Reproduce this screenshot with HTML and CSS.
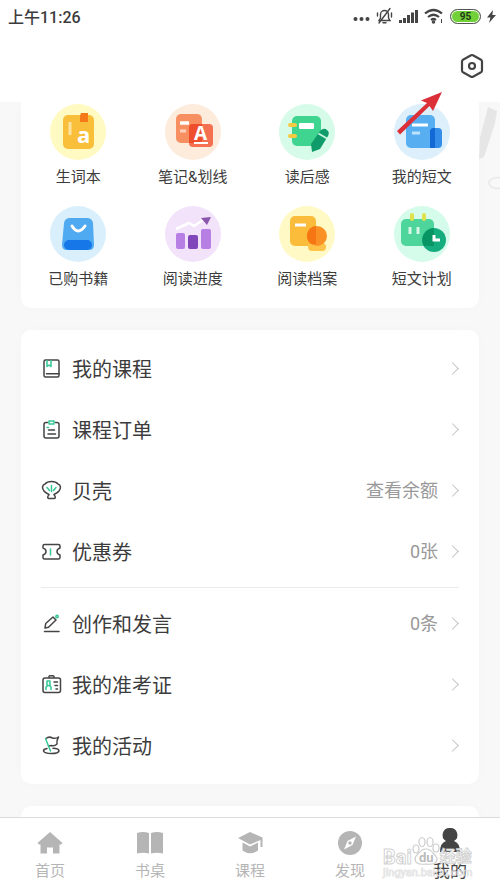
FILE: index.html
```html
<!DOCTYPE html>
<html lang="zh-CN">
<head>
<meta charset="utf-8">
<meta name="viewport" content="width=device-width, initial-scale=1">
<title>我的</title>
<link rel="stylesheet" href="styles.css">
</head>
<body>
<div class="app">
  <header class="top">
    <div class="status">
      <span class="time">上午11:26</span>
      <div class="status-icons">
        <svg width="17" height="18" viewBox="0 0 17 18" fill="#444"><circle cx="2.500" cy="12" r="2"/><circle cx="8.500" cy="12" r="2"/><circle cx="14.500" cy="12" r="2"/></svg>
        <svg width="17" height="18" viewBox="0 0 17 18" fill="none" stroke="#444" stroke-width="1.400" stroke-linecap="round"><path d="M3 13.500h11l-1.500-2.500V7.500a4 4 0 0 0-8 0V11zM7 15.800h3M14 1.500L3 16M1.500 6v3M15.500 6v4"/></svg>
        <svg width="19" height="18" viewBox="0 0 19 18" fill="#444"><path d="M0 13h3v3H0zM4 11h3v5H4zM8 8h3v8H8zM12 5.500h3V16h-3zM16 3h3v13h-3z"/></svg>
        <svg width="20" height="18" viewBox="0 0 20 18" fill="none" stroke="#444" stroke-width="2.200"><path d="M1 6.500q8.500-7 17 0M4 10q5.500-4.500 11 0M7 13q2.500-2 5 0"/><circle cx="9.500" cy="15" r=".7" fill="#444"/><path d="M17.500 12v4" stroke-width="1"/></svg>
        <span class="battery">95</span>
        <svg width="9" height="18" viewBox="0 0 9 18" fill="#444"><path d="M6 3L0 10.500h3.500L2 16l7-8H5.300z"/></svg>
      </div>
    </div>
    <button class="settings" aria-label="设置">
      <svg width="24" height="26" viewBox="0 0 24 26" fill="none" stroke="#444" stroke-width="2.200" stroke-linejoin="round"><path d="M11 2.300q1-.6 2 0l8 4.400q1 .6 1 1.800v9q0 1.200-1 1.800l-8 4.400q-1 .6-2 0l-8-4.400q-1-.6-1-1.800v-9q0-1.200 1-1.800z"/><circle cx="12" cy="13" r="3"/></svg>
    </button>
    <svg class="arrow" width="48" height="44" viewBox="0 0 48 44" fill="#dc3038" aria-hidden="true"><path d="M46 1L37 20l-3.500-5L4 43.500 1 40 31 12l-6-2.500z"/></svg>
  </header>

  <main class="content">
    <svg class="backdrop" width="22" height="95" viewBox="0 0 22 95" aria-hidden="true"><path d="M10 5l9 4-2 12L6 55l-5 2 1-21z" fill="#e6e6e6"/><ellipse cx="19" cy="81" rx="8" ry="5.500" fill="none" stroke="#e8e8e8" stroke-width="1.500"/></svg>
    <nav class="card shortcuts" aria-label="学习工具">
      <a class="shortcut" href="#words">
        <svg class="badge" viewBox="0 0 56 56"><circle cx="28" cy="28" r="28" fill="#fffac2"/><rect x="13" y="11" width="31" height="34" rx="5" fill="#f9bf3a"/><path d="M31 9h7v9h-8v-6z" fill="#f57918"/><path d="M20 18v13" stroke="#fce3a0" stroke-width="3"/><text x="27" y="39" class="glyph">a</text></svg>
        <span>生词本</span>
      </a>
      <a class="shortcut" href="#notes">
        <svg class="badge" viewBox="0 0 56 56"><circle cx="28" cy="28" r="28" fill="#fdebdc"/><rect x="11" y="10" width="26" height="29" rx="5" fill="#f88f60"/><rect x="24" y="20" width="24" height="23" rx="4" fill="#f35f3e" fill-opacity=".88"/><path d="M24 24a4 4 0 0 1 4-4h9v19H24z" fill="#ec4424" fill-opacity=".7"/><path d="M15 19h9" stroke="#fff" stroke-width="3.500"/><path d="M15 27h6" stroke="#fed0bd" stroke-width="3"/><text x="29" y="36" class="glyph glyph-small">A</text><path d="M29 39h14" stroke="#fff" stroke-width="2"/></svg>
        <span>笔记&amp;划线</span>
      </a>
      <a class="shortcut" href="#thoughts">
        <svg class="badge" viewBox="0 0 56 56"><circle cx="28" cy="28" r="28" fill="#d7fbe9"/><rect x="13" y="12" width="29" height="30" rx="5" fill="#3fd591"/><rect x="20" y="19" width="15" height="6" rx="1" fill="#fff"/><path d="M11 21h5M11 32h5" stroke="#f7ca42" stroke-width="4" stroke-linecap="round"/><path d="M41 27q4-4 7-1 3 2 1 6L41 45l-8 3-1-8z" fill="#109b6b"/><path d="M39.500 29.500l8.500 5" stroke="#c5f5e0" stroke-width="2"/></svg>
        <span>读后感</span>
      </a>
      <a class="shortcut" href="#essays">
        <svg class="badge" viewBox="0 0 56 56"><circle cx="28" cy="28" r="28" fill="#dceffb"/><rect x="12" y="11" width="29" height="33" rx="5" fill="#57aef1"/><rect x="36" y="24" width="12" height="20" rx="4" fill="#348ee9"/><path d="M36 28a4 4 0 0 1 4-4h1v20h-5z" fill="#1268d5"/><path d="M18 21h16" stroke="#fff" stroke-width="3"/><path d="M18 29h8" stroke="#bce3fb" stroke-width="3"/></svg>
        <span>我的短文</span>
      </a>
      <a class="shortcut" href="#bought">
        <svg class="badge" viewBox="0 0 56 56"><circle cx="28" cy="28" r="28" fill="#d9effc"/><path d="M20 12h17q5 0 6 5l1 22q0 5-5 5H17q-5 0-5-5l2-22q1-5 6-5z" fill="#50aaf2"/><rect x="14" y="34" width="28" height="10" rx="5" fill="#1677e8"/><path d="M22 20q6 10 13 0" fill="none" stroke="#fff" stroke-width="3" stroke-linecap="round"/></svg>
        <span>已购书籍</span>
      </a>
      <a class="shortcut" href="#progress">
        <svg class="badge" viewBox="0 0 56 56"><circle cx="28" cy="28" r="28" fill="#f2e3fb"/><rect x="11" y="27" width="9" height="16" rx="2" fill="#b77ee3"/><rect x="23" y="29" width="10" height="14" rx="2" fill="#8246bb"/><rect x="36" y="23" width="10" height="20" rx="2" fill="#b77ee3"/><path d="M11 23l13-6 5 3 9-6" fill="none" stroke="#fff" stroke-width="2.500"/><path d="M36 12l10-1-4 8z" fill="#8a56ae"/></svg>
        <span>阅读进度</span>
      </a>
      <a class="shortcut" href="#archive">
        <svg class="badge" viewBox="0 0 56 56"><circle cx="28" cy="28" r="28" fill="#fffac5"/><rect x="11" y="10" width="26" height="30" rx="5" fill="#fabc3a"/><rect x="29" y="37" width="18" height="8" rx="4" fill="#ffc34a"/><circle cx="38" cy="30" r="10" fill="#f99125"/><path d="M37 20v18l-5 0a10 10 0 0 1 5-18z" fill="#f67614"/><path d="M16 19h11" stroke="#fff" stroke-width="3"/></svg>
        <span>阅读档案</span>
      </a>
      <a class="shortcut" href="#plan">
        <svg class="badge" viewBox="0 0 56 56"><circle cx="28" cy="28" r="28" fill="#d5fbea"/><rect x="7" y="13" width="33" height="27" rx="5" fill="#4dd59b"/><path d="M18 9v4M30 9v4" stroke="#dfe24b" stroke-width="4" stroke-linecap="round"/><path d="M16 21v7M24 21v7" stroke="#d6f8e8" stroke-width="3"/><circle cx="40" cy="34" r="12" fill="#16ad7e"/><path d="M40 22v18H30a12 12 0 0 1 10-18z" fill="#079564"/><path d="M40 29v5h6" fill="none" stroke="#fff" stroke-width="3"/></svg>
        <span>短文计划</span>
      </a>
    </nav>

    <section class="card list">
      <a class="row" href="#courses">
        <svg class="line-icon" viewBox="0 0 20 20"><rect x="3" y="1" width="15" height="17" rx="1.500"/><path d="M5.500 14.800H18"/><path class="accent" d="M6 1.500v6l2-1.500 2 1.500v-6"/></svg>
        <span class="label">我的课程</span><span class="chevron"></span>
      </a>
      <a class="row" href="#orders">
        <svg class="line-icon" viewBox="0 0 20 20"><path d="M6.500 2.500H5Q3 2.500 3 4.500v11.500q0 2 2 2h11q2 0 2-2V4.500q0-2-2-2h-1.500M7.500 10h6M7 14h7.500"/><path class="accent" d="M8 1h5v3H8zM6 7.500h1.500"/></svg>
        <span class="label">课程订单</span><span class="chevron"></span>
      </a>
      <a class="row" href="#shells">
        <svg class="line-icon" viewBox="0 0 20 20"><path d="M8 13.500Q1.500 10.500 1.500 6q.5-2.500 2.500-3 2-2.500 6.500-2.500T17 3q2 .5 2.500 3 0 4.500-6.500 7.500.3 1 1 1.500.8 2.500-1 2.500H8q-1.800 0-1-2.500.7-.5 1-1.500z"/><path class="accent" d="M10.500 4.500v6M6 6.500l2.500 3M15 6.500l-2.500 3"/></svg>
        <span class="label">贝壳</span><span class="value">查看余额</span><span class="chevron"></span>
      </a>
      <a class="row" href="#coupons">
        <svg class="line-icon" viewBox="0 0 20 20"><path d="M3.500 2.500h14Q19 2.500 19 4v2q-3 1-3 3.500t3 3.500v2.500q0 1.500-1.500 1.500h-14Q2 17 2 15.500V13q3-1 3-3.500T2 6V4q0-1.500 1.500-1.500z"/><path class="accent" d="M9.500 7v6"/></svg>
        <span class="label">优惠券</span><span class="value">0张</span><span class="chevron"></span>
      </a>
      <hr class="divider">
      <a class="row" href="#posts">
        <svg class="line-icon" viewBox="0 0 20 20"><path d="M4 14l.7-4.500L12 3l3 3-7.500 7.300zM3.500 17.500h14.500"/><circle class="accent" cx="16" cy="2.500" r="1.200"/></svg>
        <span class="label">创作和发言</span><span class="value">0条</span><span class="chevron"></span>
      </a>
      <a class="row" href="#exam">
        <svg class="line-icon" viewBox="0 0 20 20"><path d="M8 3V1.500q0-.8 1-.8h3q1 0 1 .8V3M4 3h13.500q2 0 2 2v10.500q0 2-2 2H4q-2 0-2-2V5q0-2 2-2zM13 7h3.500M14 10.500h2.500M15 14h1.500"/><path class="accent" d="M5 14.500V12l2-1.500h1l2 1.500v2.500M6 6h3v4.500H6z"/></svg>
        <span class="label">我的准考证</span><span class="chevron"></span>
      </a>
      <a class="row" href="#events">
        <svg class="line-icon" viewBox="0 0 20 20"><path d="M5 2.500q3-2.500 6.500-.5 3 1 6-1-2 3-1.500 7-2.500 2.500-5.500 1.500l-3 .5M6 12.500Q2.500 13 2.500 15q1 2.500 8 2.500t7.500-2.500q0-2.500-6-2.700"/><path class="accent" d="M4.500 2.500L9.500 15"/></svg>
        <span class="label">我的活动</span><span class="chevron"></span>
      </a>
    </section>
    <section class="card next"></section>
  </main>

  <nav class="tabs" aria-label="主导航">
    <a class="tab" href="#home"><svg width="28" height="28" viewBox="0 0 28 28"><path d="M14 3l12.500 11-1.500 1.500h-1.500V24.500h-6.500v-6h-6v6H4.500v-9H3L1.500 14z"/></svg><span>首页</span></a>
    <a class="tab" href="#desk"><svg width="28" height="28" viewBox="0 0 28 28"><path d="M1 4q6-2 12 0v20.500q-6-1.500-12 0zM15 4q6-2 12 0v20.500q-6-1.500-12 0z"/></svg><span>书桌</span></a>
    <a class="tab" href="#class"><svg width="28" height="28" viewBox="0 0 28 28"><path d="M14 3l12.500 5.500V18h-2v-7L14 15.500 2 9zM6.500 13.500L14 17.500l8-4v8Q14 27 6.500 21.500z"/></svg><span>课程</span></a>
    <a class="tab" href="#discover"><svg width="28" height="28" viewBox="0 0 28 28"><circle cx="14" cy="14" r="12"/><path d="M20 7.500L16.500 16 8 20.500 11.500 12z" fill="#fff"/><circle cx="14" cy="14" r="1.700"/></svg><span>发现</span></a>
    <a class="tab active" href="#me" aria-current="page"><svg width="28" height="28" viewBox="0 0 28 28"><path d="M14-1a7 7 0 0 1 4 13q6 2 6 11H4q0-9 6-11a7 7 0 0 1 4-13z"/></svg><span>我的</span></a>
    <div class="watermark">
      <div class="brand"><span>Bai</span><svg width="28" height="32" viewBox="0 0 28 32"><g fill="#fff" stroke="#ccc" stroke-width="1.200"><ellipse cx="4" cy="14" rx="3" ry="4"/><ellipse cx="10" cy="7" rx="3" ry="4.500"/><ellipse cx="18" cy="7" rx="3" ry="4.500"/><ellipse cx="24" cy="13" rx="3" ry="4"/><path d="M14 14q4 0 7 4 6 5 3 9-2 3-10 2-8 1-10-2-3-4 3-9 3-4 7-4z"/></g><text x="7" y="27" class="du">du</text></svg><span>经验</span></div>
      <div class="site">jingyan.baidu.com</div>
    </div>
  </nav>
</div>
</body>
</html>
```
FILE: styles.css
```css
* { box-sizing: border-box; }

body {
  margin: 0;
  color: #3c3c3c;
  background: #f8f8f8;
  font-family: Roboto, "Noto Sans CJK SC", sans-serif;
}

a { color: inherit; text-decoration: none; }

.app {
  display: flex;
  flex-direction: column;
  height: 100vh;
  overflow: hidden;
}

.top {
  position: relative;
  flex: none;
  height: 102px;
  background: #fff;
}

.status {
  display: flex;
  align-items: center;
  justify-content: space-between;
  height: 32px;
  padding: 0 4px 0 8px;
}

.time { font-size: 16px; font-weight: 500; }

.status-icons { display: flex; align-items: center; gap: 6px; }

.battery {
  width: 31px;
  height: 15px;
  border: 1px solid #555;
  border-radius: 8px;
  background: #72d038;
  box-shadow: inset 0 0 0 1px #fff;
  color: #243b18;
  font-size: 10px;
  font-weight: 700;
  line-height: 13px;
  text-align: center;
}

.settings {
  display: block;
  margin: 21px 16px 0 auto;
  padding: 0;
  border: 0;
  background: none;
}

.settings svg { display: block; }

.arrow {
  position: absolute;
  z-index: 2;
  top: 91px;
  right: 56px;
}

.content {
  position: relative;
  display: flex;
  flex: 1;
  flex-direction: column;
  gap: 22px;
  min-height: 0;
  padding: 0 21px;
  overflow: hidden;
}

.backdrop { position: absolute; top: 0; right: 0; }

.card {
  flex: none;
  border-radius: 10px;
  background: #fff;
  box-shadow: 0 0 12px rgba(0, 0, 0, 0.02);
}

.shortcuts {
  display: grid;
  grid-template-columns: repeat(4, 1fr);
  row-gap: 16px;
  padding: 2px 0 16px;
  border-radius: 0 0 10px 10px;
}

.shortcut {
  display: flex;
  flex-direction: column;
  align-items: center;
  gap: 4px;
  font-size: 15px;
  line-height: 26px;
}

.badge { width: 56px; height: 56px; }

.glyph {
  fill: #fff;
  font: 700 22px "Open Sans", sans-serif;
}

.glyph-small { font-size: 19px; }

.list { padding: 8px 20px; }

.row {
  display: flex;
  align-items: center;
  height: 61px;
}

.line-icon {
  width: 20px;
  height: 20px;
  margin-right: 11px;
  overflow: visible;
  fill: none;
  stroke: #444;
  stroke-width: 1.5px;
  stroke-linecap: round;
  stroke-linejoin: round;
}

.line-icon .accent { stroke: #35c695; }

.label { flex: 1; font-size: 20px; }

.value { margin-right: 10px; color: #999; font-size: 18px; line-height: 24px; }

.chevron {
  width: 9px;
  height: 9px;
  margin-right: 2px;
  border: solid #c4c4c4;
  border-width: 1px 1px 0 0;
  transform: rotate(45deg);
}

.divider {
  height: 1px;
  margin: 5px 0;
  border: 0;
  background: #ebebeb;
}

.next { height: 60px; }

.tabs {
  position: relative;
  display: grid;
  flex: none;
  grid-template-columns: repeat(5, 1fr);
  height: 72px;
  border-top: 1px solid #dcdcdc;
  background: #fff;
}

.tab {
  display: flex;
  flex-direction: column;
  align-items: center;
  gap: 1px;
  padding-top: 11px;
  color: #b5b5b5;
  font-size: 15px;
  line-height: 26px;
}

.tab svg { overflow: visible; fill: currentColor; }

.tab.active { color: #444; font-size: 17px; }

.watermark {
  position: absolute;
  right: 27px;
  bottom: 10px;
  width: 90px;
  color: #fff;
  pointer-events: none;
}

.brand {
  display: flex;
  align-items: flex-end;
  font-size: 20px;
  font-weight: 700;
  line-height: 20px;
  -webkit-text-stroke: 1px rgba(200, 200, 200, 0.8);
}

.brand svg { flex: none; }

.brand span:last-child { flex: none; font-size: 16px; }

.du {
  fill: #bbb;
  stroke: none;
  font-size: 13px;
  -webkit-text-stroke: 0;
}

.site {
  color: rgba(255, 255, 255, 0.7);
  font-size: 11px;
  line-height: 12px;
  -webkit-text-stroke: 1px rgba(205, 205, 205, 0.5);
}
```
